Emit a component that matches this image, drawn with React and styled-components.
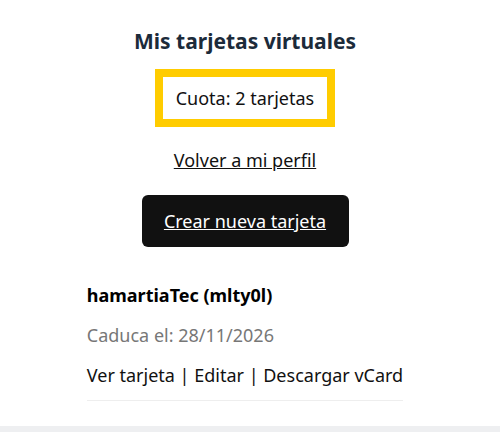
import React from "react";
import styled, { createGlobalStyle } from "styled-components";

const GlobalStyle = createGlobalStyle`
  html, body {
    margin: 0;
    padding: 0;
    background: #ffffff;
  }
  body {
    font-family: "Noto Sans", "Open Sans", sans-serif;
    color: #111;
  }
`;

const Page = styled.div`
  min-height: 432px;
  display: flex;
  flex-direction: column;
`;

const Main = styled.main`
  width: 490px;
  display: flex;
  flex-direction: column;
  align-items: center;
  padding-top: 26px;
  padding-bottom: 25px;
`;

const Title = styled.h1`
  margin: 0;
  font-size: 21px;
  line-height: 30px;
  font-weight: 700;
  color: #1c2b3a;
`;

const Quota = styled.div`
  margin-top: 13px;
  border: 8px solid #ffcc00;
  padding: 0 13px;
  height: 42px;
  display: flex;
  align-items: center;
  font-size: 18px;
  color: #111;
`;

const BackLink = styled.a`
  margin-top: 20px;
  font-size: 18px;
  line-height: 26px;
  color: #111;
  text-decoration: underline;
`;

const CreateButton = styled.a`
  margin-top: 22px;
  width: 207px;
  height: 52px;
  border-radius: 6px;
  background: #111111;
  color: #fff;
  display: flex;
  align-items: center;
  justify-content: center;
  font-size: 18px;
  text-decoration: underline;
`;

const CardList = styled.div`
  margin-top: 35px;
  display: flex;
  flex-direction: column;
`;

const Card = styled.div`
  padding-bottom: 12px;
  border-bottom: 1px solid #eeeeee;
  display: flex;
  flex-direction: column;
  gap: 14px;
`;

const CardName = styled.div`
  font-size: 18px;
  line-height: 26px;
  font-weight: 700;
  color: #000;
`;

const Expiry = styled.div`
  font-size: 18px;
  line-height: 26px;
  color: #777777;
`;

const Actions = styled.div`
  font-size: 18px;
  line-height: 26px;
  color: #111;
`;

const Footer = styled.footer`
  flex: 1;
  background: #eeeff1;
`;

export default function App() {
  return (
    <>
      <GlobalStyle />
      <Page>
        <Main>
          <Title>Mis tarjetas virtuales</Title>
          <Quota>Cuota: 2 tarjetas</Quota>
          <BackLink>Volver a mi perfil</BackLink>
          <CreateButton>Crear nueva tarjeta</CreateButton>
          <CardList>
            <Card>
              <CardName>hamartiaTec (mlty0l)</CardName>
              <Expiry>Caduca el: 28/11/2026</Expiry>
              <Actions>Ver tarjeta | Editar | Descargar vCard</Actions>
            </Card>
          </CardList>
        </Main>
        <Footer />
      </Page>
    </>
  );
}
